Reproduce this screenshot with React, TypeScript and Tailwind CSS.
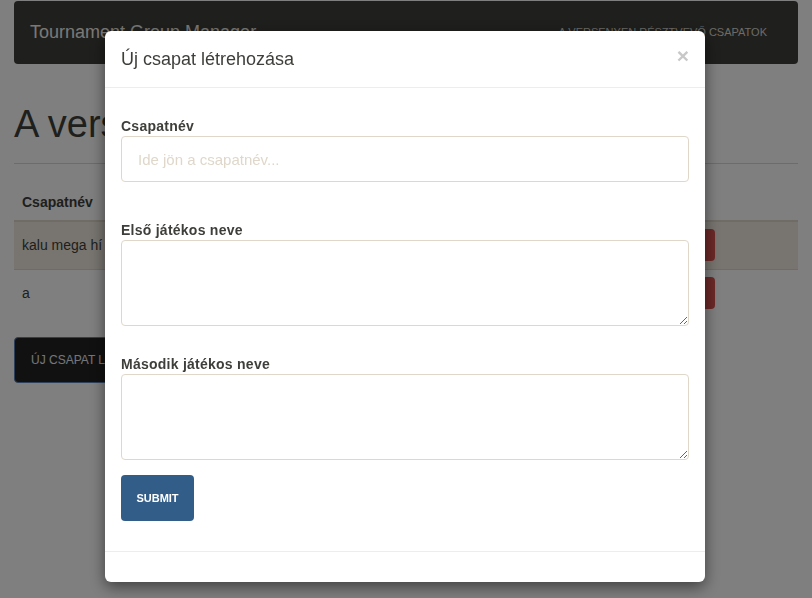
import React from 'react';

/**
 * Tournament Group Manager – csapatlista, nyitott „Új csapat” modallal
 */

const teams = [
  { name: 'kalu mega hí' },
  { name: 'a' },
];

const font = { fontFamily: '"Liberation Sans", Arial, Helvetica, sans-serif' };

const labelCls =
  'block h-[20px] text-[14px] font-bold leading-[20px] tracking-[0.25px] text-[#3e3f3a]';

const TeamTable = () => (
  <table className="w-full border-collapse text-[14px] text-[#3e3f3a]">
    <thead>
      <tr className="border-b-2 border-[#dfd7ca]">
        <th className="h-[36px] px-2 text-left font-bold">Csapatnév</th>
        <th className="px-2" />
      </tr>
    </thead>
    <tbody>
      {teams.map((t, i) => (
        <tr
          key={t.name}
          className={`${i > 0 ? 'border-t border-[#dfd7ca]' : ''} ${i % 2 === 0 ? 'bg-[#f1ebe1]' : ''}`}
        >
          <td className="h-[48px] px-2">{t.name}</td>
          <td className="w-[100px] pr-[83px] text-right">
            <button className="h-[32px] w-[70px] rounded bg-[#d9534f] text-[12px] text-white">
              TÖRLÉS
            </button>
          </td>
        </tr>
      ))}
    </tbody>
  </table>
);

const NewTeamModal = () => (
  <div className="absolute left-[105px] top-[31px] h-[551px] w-[600px] rounded-[6px] bg-white shadow-[0_5px_15px_rgba(0,0,0,0.5)]">
    {/* fejléc */}
    <div className="relative flex h-[57px] items-center border-b border-[#f0ede8] px-4">
      <h4 className="text-[18px] text-[#3e3f3a]">Új csapat létrehozása</h4>
      <button className="absolute right-[16px] top-[14px] text-[21px] font-bold leading-none text-[#c8c8c8]">
        ×
      </button>
    </div>

    {/* űrlap */}
    <div className="border-b border-[#f0ede8] px-4 pb-[30px] pt-[28px]">
      <label className={labelCls}>Csapatnév</label>
      <input
        placeholder="Ide jön a csapatnév..."
        className="block h-[46px] w-full rounded border border-[#dfd7ca] px-4 text-[15px] text-[#3e3f3a] outline-none placeholder:text-[#dfd7ca]"
      />

      <label className={`mt-[38px] ${labelCls}`}>Első játékos neve</label>
      <textarea className="block h-[86px] w-full rounded border border-[#dfd7ca] px-4 outline-none" />

      <label className={`mt-[28px] ${labelCls}`}>Második játékos neve</label>
      <textarea className="block h-[86px] w-full rounded border border-[#dfd7ca] px-4 outline-none" />

      <button className="mt-[15px] h-[46px] w-[73px] rounded bg-[#325d88] text-[11px] font-bold text-white">
        SUBMIT
      </button>
    </div>

    {/* lábléc (üres) */}
    <div className="h-[30px]" />
  </div>
);

export default function App() {
  return (
    <div className="relative h-[598px] overflow-hidden bg-white" style={font}>
      <div className="px-[14px] pt-px">
        <nav className="flex h-[63px] items-center justify-between rounded bg-[#3e3f3a] pl-4 pr-[31px]">
          <span className="text-[18px] text-[#f4f1ec]">Tournament Group Manager</span>
          <span className="text-[11px] uppercase text-[#d8d6cf]">A versenyen résztvevő csapatok</span>
        </nav>

        <h1 className="mt-[39px] h-[42px] text-[38px] leading-[42px] text-[#3e3f3a]">
          A versenyen résztvevő csapatok
        </h1>
        <hr className="mt-[18px] border-t border-[#dfd7ca]" />

        <div className="mt-[21px]">
          <TeamTable />
        </div>

        <button className="mt-[20px] h-[46px] rounded border border-[#5b7fb3] bg-[#222222] px-4 text-[12px] uppercase text-[#e8ecf2]">
          Új csapat létrehozása
        </button>
      </div>

      {/* sötétítés + modal */}
      <div className="fixed inset-0 bg-black/50">
        <NewTeamModal />
      </div>
    </div>
  );
}
